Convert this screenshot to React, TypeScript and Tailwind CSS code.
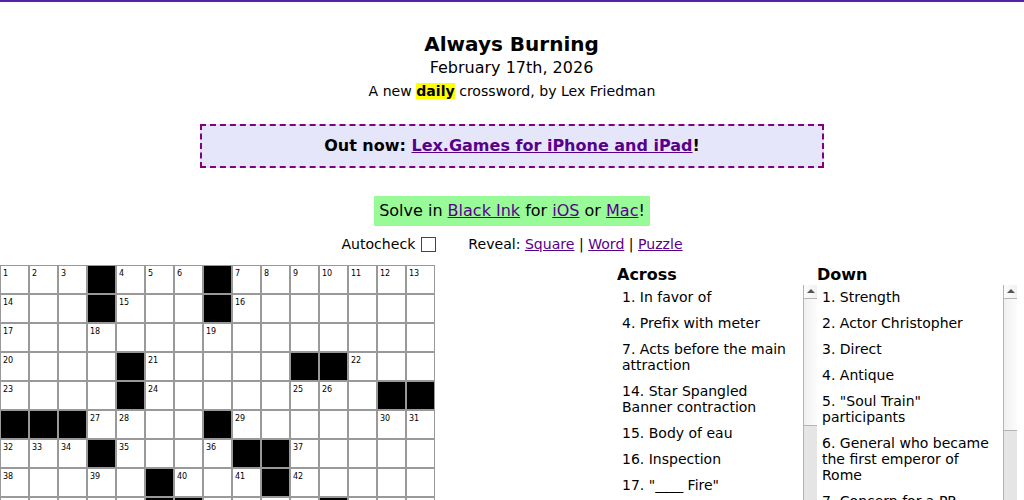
import React from 'react';

// '#' is a block, '.' is an open square
const rows = [
  '...#...#.......',
  '...#...#.......',
  '...............',
  '....#.....##...',
  '....#........##',
  '###....#.......',
  '...#....##.....',
  '.....#...#.....',
  '.....##....#...',
];

const isBlock = (r: number, c: number) => (rows[r]?.[c] ?? '#') === '#';

let next = 1;
const cells = rows.flatMap((row, r) =>
  row.split('').map((_, c) => {
    const block = isBlock(r, c);
    const startsAcross = isBlock(r, c - 1) && !isBlock(r, c + 1);
    const startsDown = isBlock(r - 1, c) && !isBlock(r + 1, c);
    // only the top edge of the last row is visible, so it carries no numbers
    const numbered = !block && r < rows.length - 1 && (startsAcross || startsDown);
    return { block, number: numbered ? next++ : null };
  })
);

const across = [
  '1. In favor of',
  '4. Prefix with meter',
  '7. Acts before the main attraction',
  '14. Star Spangled Banner contraction',
  '15. Body of eau',
  '16. Inspection',
  '17. "____ Fire"',
];

const down = [
  '1. Strength',
  '2. Actor Christopher',
  '3. Direct',
  '4. Antique',
  '5. "Soul Train" participants',
  '6. General who became the first emperor of Rome',
  '7. Concern for a PR',
];

const Link = ({ children }: { children: React.ReactNode }) => (
  <a href="#" className="text-[#58008c] underline">{children}</a>
);

const Scrollbar = ({ thumb }: { thumb: string }) => (
  <div className="flex w-[14px] shrink-0 flex-col border-l border-[#b4b4b4] bg-[#e5e5e5]">
    <div className="flex h-[14px] shrink-0 items-center justify-center border-b border-[#b4b4b4] bg-linear-to-r from-[#fcfcfc] to-[#f0f0f0]">
      <svg width="8" height="4" viewBox="0 0 8 4" className="-mt-px">
        <path d="M4 0L8 4H0Z" fill="#555" />
      </svg>
    </div>
    <div className={`shrink-0 border-b border-[#b4b4b4] bg-linear-to-r from-[#f0f0f0] to-[#fcfcfc] ${thumb}`} />
  </div>
);

const ClueList = ({ title, clues, thumb }: { title: string; clues: string[]; thumb: string }) => (
  <div className="flex w-[200px] flex-col">
    <h3 className="h-5 text-[16px] leading-5 font-bold">{title}</h3>
    <div className="flex min-h-0 flex-1">
      <ul className="-mt-px min-w-0 flex-1 text-[14px] leading-4">
        {clues.map((clue) => (
          <li key={clue} className="p-[5px]">{clue}</li>
        ))}
      </ul>
      <Scrollbar thumb={thumb} />
    </div>
  </div>
);

const App = () => {
  return (
    <div className="flex h-[500px] flex-col overflow-hidden border-t-2 border-[#5522aa] bg-white font-['DejaVu_Sans',sans-serif] text-black">
      <header className="pt-[30px] text-center">
        <h1 className="pr-px text-[20px] leading-6 font-bold">Always Burning</h1>
        <h2 className="pr-px text-[16px] leading-[23px]">February 17th, 2026</h2>
        <p className="text-[14.08px] leading-6">
          A new <b className="bg-[#ffff00]">daily</b> crossword, by Lex Friedman
        </p>
      </header>

      <div className="mx-auto mt-[21px] h-11 w-[624px] shrink-0 border-2 border-dashed border-[#800080] bg-[#e6e6fa] text-center text-[16px] leading-[39px] font-bold">
        Out now: <Link>Lex.Games for iPhone and iPad</Link>!
      </div>

      <div className="mx-auto mt-7 h-[30px] shrink-0 bg-[#98fb98] px-[5px] text-[16px] leading-[29px]">
        Solve in <Link>Black Ink</Link> for <Link>iOS</Link> or <Link>Mac</Link>!
      </div>

      <div className="flex h-[39px] shrink-0 items-center justify-center pb-[3px] text-[14.08px] leading-4">
        <span>Autocheck</span>
        <span className="ml-1.5 h-[15px] w-[15px] border border-[#444444] bg-white" />
        <span className="ml-8">
          Reveal: <Link>Square</Link> | <Link>Word</Link> | <Link>Puzzle</Link>
        </span>
      </div>

      <main className="flex min-h-0 flex-1 justify-between">
        <div className="grid w-[435px] shrink-0 auto-rows-[29px] grid-cols-15">
          {cells.map((cell, index) => (
            <div
              key={index}
              className={`border border-[#999999] pt-[3px] pl-[2px] text-[8px] leading-[9px] ${cell.block ? 'bg-black' : 'bg-white'}`}
            >
              {cell.number}
            </div>
          ))}
        </div>
        <div className="flex pr-[7px]">
          <ClueList title="Across" clues={across} thumb="h-[127px]" />
          <ClueList title="Down" clues={down} thumb="h-[132px]" />
        </div>
      </main>
    </div>
  );
};

export default App;
